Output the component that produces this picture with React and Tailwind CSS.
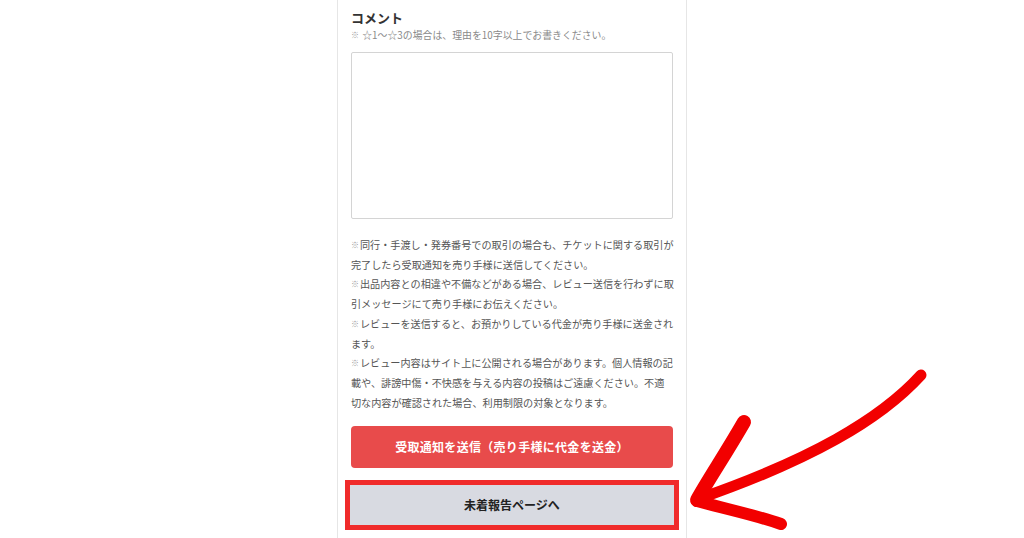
const Mark = () => <span className="text-[8px] align-[1px] text-[#999] mr-[1px]">※</span>;

export default function App() {
  const lines = [
    [true, "同行・手渡し・発券番号での取引の場合も、チケットに関する取引が"],
    [false, "完了したら受取通知を売り手様に送信してください。"],
    [true, "出品内容との相違や不備などがある場合、レビュー送信を行わずに取"],
    [false, "引メッセージにて売り手様にお伝えください。"],
    [true, "レビューを送信すると、お預かりしている代金が売り手様に送金され"],
    [false, "ます。"],
    [true, "レビュー内容はサイト上に公開される場合があります。個人情報の記"],
    [false, "載や、誹謗中傷・不快感を与える内容の投稿はご遠慮ください。不適"],
    [false, "切な内容が確認された場合、利用制限の対象となります。"],
  ];

  return (
    <div
      className="relative w-full h-[538px] bg-white flex justify-center overflow-hidden"
      style={{ fontFamily: '"Noto Sans CJK JP", "Noto Sans", sans-serif' }}
    >
      {/* Form panel */}
      <div className="w-[350px] h-full border-x border-[#e6e6e6] px-[13px] pt-[9px] flex flex-col">
        <h2 className="text-[13px] leading-[17px] font-bold text-[#333]">コメント</h2>
        <p className="mt-[3px] text-[9.9px] leading-[12px] text-[#8a8a8a] whitespace-nowrap">
          <Mark /> ☆1〜☆3の場合は、理由を10字以上でお書きください。
        </p>

        {/* Textarea */}
        <div className="mt-[11px] h-[167px] border border-[#d4d4d4] rounded-[2px] bg-white" />

        {/* Notes */}
        <div className="mt-[16px] text-[10.15px] leading-[19.7px] text-[#555]">
          {lines.map(([m, t], i) => (
            <p key={i} className="whitespace-nowrap">
              {m && <Mark />}
              {t}
            </p>
          ))}
        </div>

        {/* Buttons */}
        <button className="mt-[14px] h-[42px] w-full rounded-[4px] bg-[#e84b4b] text-white text-[12px] font-semibold tracking-wide">
          受取通知を送信（売り手様に代金を送金）
        </button>
        <div className="mt-[12px] -mx-[6px] border-[5px] border-[#f02b2b]">
          <button className="h-[40px] w-full bg-[#d8dae1] text-[#222] text-[12px] font-bold">
            未着報告ページへ
          </button>
        </div>
      </div>

      {/* Hand-drawn arrow overlay */}
      <svg
        className="absolute inset-0 pointer-events-none"
        width="1024"
        height="538"
        viewBox="0 0 1024 538"
      >
        <g fill="none" stroke="#f20000" strokeLinecap="round" strokeLinejoin="round">
          <path d="M921 375 C 880 420, 810 460, 698 499" strokeWidth="11" />
          <path d="M744 422 C 725 455, 708 480, 697 500" strokeWidth="14" />
          <path d="M697 501 C 730 510, 755 515, 781 524" strokeWidth="12" />
        </g>
      </svg>
    </div>
  );
}
